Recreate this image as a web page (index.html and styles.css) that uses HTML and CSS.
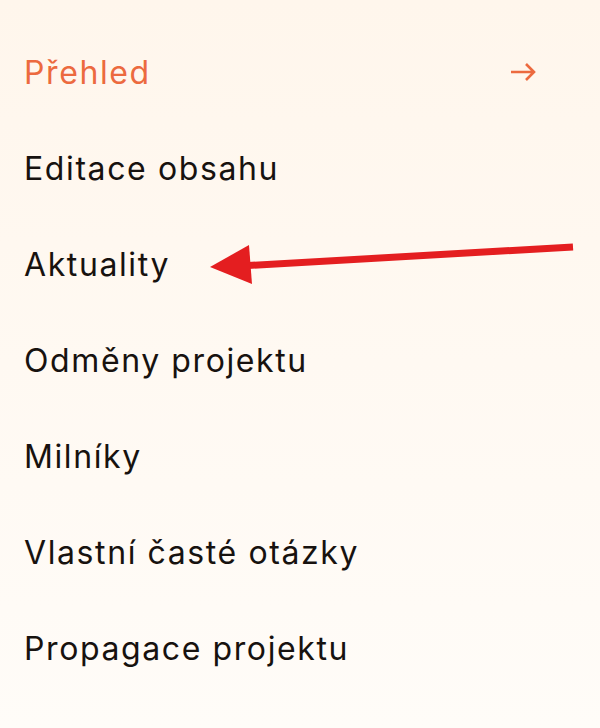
FILE: index.html
```html
<!DOCTYPE html>
<html lang="cs">
<head>
<meta charset="utf-8">
<link rel="stylesheet" href="styles.css">
</head>
<body>
<nav class="menu">
  <a class="item active" href="#"><span>Přehled</span>
    <svg class="go" width="26" height="20" viewBox="0 0 26 20"><path d="M1 10H24M16 2L24 10L16 18" fill="none" stroke="#ec6a3f" stroke-width="2.6"/></svg>
  </a>
  <a class="item" href="#"><span>Editace obsahu</span></a>
  <a class="item" href="#"><span>Aktuality</span></a>
  <a class="item" href="#"><span>Odměny projektu</span></a>
  <a class="item" href="#"><span>Milníky</span></a>
  <a class="item" href="#"><span>Vlastní časté otázky</span></a>
  <a class="item" href="#"><span>Propagace projektu</span></a>
</nav>
<svg class="pointer" width="600" height="728" viewBox="0 0 600 728">
  <line x1="573" y1="247" x2="240" y2="266" stroke="#e41e20" stroke-width="7"/>
  <polygon points="210,267 249,245 252,284" fill="#e41e20"/>
</svg>
</body>
</html>
```
FILE: styles.css
```css
html, body { margin: 0; padding: 0; }
body {
  width: 600px;
  height: 728px;
  background: linear-gradient(to bottom, #fff6ec 0%, #fffcf8 100%);
  font-family: "Inter", "Open Sans", sans-serif;
  position: relative;
  overflow: hidden;
}
.menu {
  display: flex;
  flex-direction: column;
  padding: 24px 64px 0 24px;
}
.item {
  display: flex;
  align-items: center;
  justify-content: space-between;
  height: 96px;
  font-size: 32px;
  color: #17120f;
  text-decoration: none;
  letter-spacing: 1.6px;
}
.item.active { color: #ec6a3f; }
.pointer { position: absolute; left: 0; top: 0; }
```
